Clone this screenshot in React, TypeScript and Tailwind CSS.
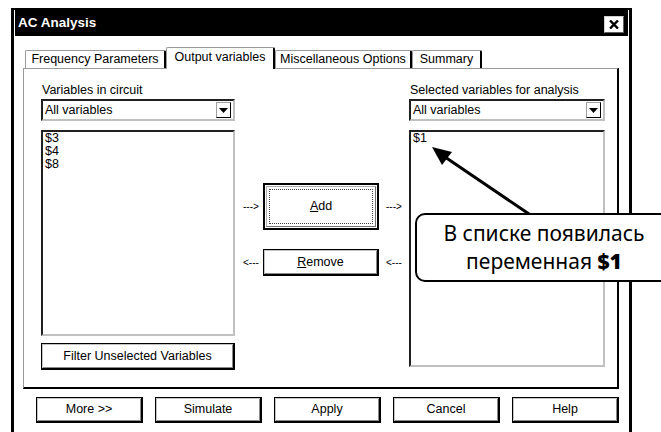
import React from "react";

const ui = "font-['Liberation_Sans',Arial,sans-serif]";
const btn =
  "flex items-center justify-center bg-white border border-black border-r-2 border-b-2 shadow-[inset_1px_1px_0_#c4c4c4,inset_-1px_-1px_0_#8a8a8a] text-[12.5px] text-black";
const sunken =
  "bg-white border-t-2 border-l-2 border-t-[#202020] border-l-[#202020] border-r-2 border-b-2 border-r-[#c0c0c0] border-b-[#c0c0c0]";

function Combo() {
  return (
    <div className={`h-[22px] flex items-center justify-between pl-[2px] pr-[2px] ${sunken}`}>
      <span className="text-[12.5px] leading-none">All variables</span>
      <div className="w-[15px] h-[16px] flex items-center justify-center border border-[#a0a0a0] border-r-black border-b-black">
        <svg width="9" height="5" viewBox="0 0 9 5">
          <path d="M0 0h9L4.5 5z" fill="#000" />
        </svg>
      </div>
    </div>
  );
}

function Tab({ label, w, active }: { label: string; w: string; active?: boolean }) {
  return (
    <div
      className={`${w} flex items-center justify-center text-[12.5px] bg-white border-t border-l border-[#9a9a9a] border-r-2 border-r-black rounded-t-[2px] ${
        active ? "h-[22px] -mb-[1px] relative z-10 pb-[3px]" : "h-[18px]"
      }`}
    >
      {label}
    </div>
  );
}

export default function App() {
  return (
    <div className={`relative w-[661px] h-[432px] overflow-hidden bg-white text-black ${ui}`}>
      {/* Dialog window */}
      <div className="ml-[11px] mt-[8px] w-[621px] h-[440px] border-x-[3px] border-t-2 border-black px-[1px] bg-white">
        <div className="h-[26px] bg-black flex items-center justify-between pl-[3px] pr-[4px]">
          <span className="text-white font-bold text-[13.5px]">AC Analysis</span>
          <div className="w-[20px] h-[17px] mt-[3px] bg-white border border-[#d0d0d0] border-r-[#606060] border-b-[#606060] flex items-center justify-center">
            <svg width="10" height="9" viewBox="0 0 10 9">
              <path d="M1 0.5 9 8.5M9 0.5 1 8.5" stroke="#000" strokeWidth="2.4" />
            </svg>
          </div>
        </div>

        <div className="pl-[8px] pt-[11px]">
          {/* Tabs */}
          <div className="flex items-end h-[21px] pl-[2px]">
            <Tab label="Frequency Parameters" w="w-[141px]" />
            <Tab label="Output variables" w="w-[109px]" active />
            <Tab label="Miscellaneous Options" w="w-[137px]" />
            <Tab label="Summary" w="w-[70px]" />
          </div>

          {/* Panel */}
          <div className="w-[596px] h-[321px] border-t border-l border-[#9a9a9a] border-r-2 border-b-2 border-r-black border-b-black pl-[17px] pt-[14px] flex">
            <div className="w-[194px] flex flex-col">
              <div className="text-[12.5px] leading-[15px] pl-[1px]">Variables in circuit</div>
              <div className="mt-[1px]">
                <Combo />
              </div>
              <div className={`mt-[9px] h-[206px] pl-[2px] text-[12.5px] leading-[13px] ${sunken}`}>
                <div>$3</div>
                <div>$4</div>
                <div>$8</div>
              </div>
              <div className={`mt-[7px] h-[27px] ${btn}`}>Filter Unselected Variables</div>
            </div>

            <div className="w-[174px] flex flex-col pt-[100px]">
              <div className="flex items-center h-[47px]">
                <span className="w-[28px] pl-[8px] text-[10px]">---&gt;</span>
                <div className="w-[116px] h-[47px] border-2 border-black bg-white p-[1px]">
                  <div className="w-full h-full border border-[#b0b0b0] border-r-[#707070] border-b-[#707070] p-[2px]">
                    <div className="w-full h-full border border-dotted border-[#404040] flex items-center justify-center text-[12.5px]">
                      <span>
                        <span className="underline">A</span>dd
                      </span>
                    </div>
                  </div>
                </div>
                <span className="pl-[7px] text-[10px]">---&gt;</span>
              </div>
              <div className="flex items-center h-[27px] mt-[19px]">
                <span className="w-[28px] pl-[8px] text-[10px]">&lt;---</span>
                <div className={`w-[116px] h-[27px] ${btn}`}>
                  <span>
                    <span className="underline">R</span>emove
                  </span>
                </div>
                <span className="pl-[7px] text-[10px]">&lt;---</span>
              </div>
            </div>

            <div className="w-[196px] flex flex-col">
              <div className="text-[12.5px] leading-[15px] pl-[1px]">Selected variables for analysis</div>
              <div className="mt-[1px]">
                <Combo />
              </div>
              <div className={`mt-[9px] h-[237px] pl-[2px] text-[12.5px] leading-[13px] ${sunken}`}>
                <div>$1</div>
              </div>
            </div>
          </div>

          {/* Bottom buttons */}
          <div className="flex gap-[12px] pl-[13px] mt-[8px]">
            <div className={`w-[107px] h-[26px] ${btn}`}>More &gt;&gt;</div>
            <div className={`w-[107px] h-[26px] ${btn}`}>Simulate</div>
            <div className={`w-[107px] h-[26px] ${btn}`}>Apply</div>
            <div className={`w-[107px] h-[26px] ${btn}`}>Cancel</div>
            <div className={`w-[107px] h-[26px] ${btn}`}>Help</div>
          </div>
        </div>
      </div>

      {/* Annotation arrow */}
      <svg className="absolute left-0 top-0 pointer-events-none" width="661" height="432">
        <line x1="532" y1="216" x2="445" y2="157" stroke="#000" strokeWidth="3" />
        <path d="M432 147 L452 152 L442 165 Z" fill="#000" />
      </svg>

      {/* Callout */}
      <div className="absolute left-[415px] top-[213px] w-[258px] h-[69px] rounded-[10px] border-2 border-black bg-white flex flex-col items-center justify-center font-['Noto_Sans',sans-serif] text-[21px] leading-[28px] text-black pb-[1px]">
        <div>В списке появилась</div>
        <div>
          переменная <span className="font-black">$1</span>
        </div>
      </div>
    </div>
  );
}
